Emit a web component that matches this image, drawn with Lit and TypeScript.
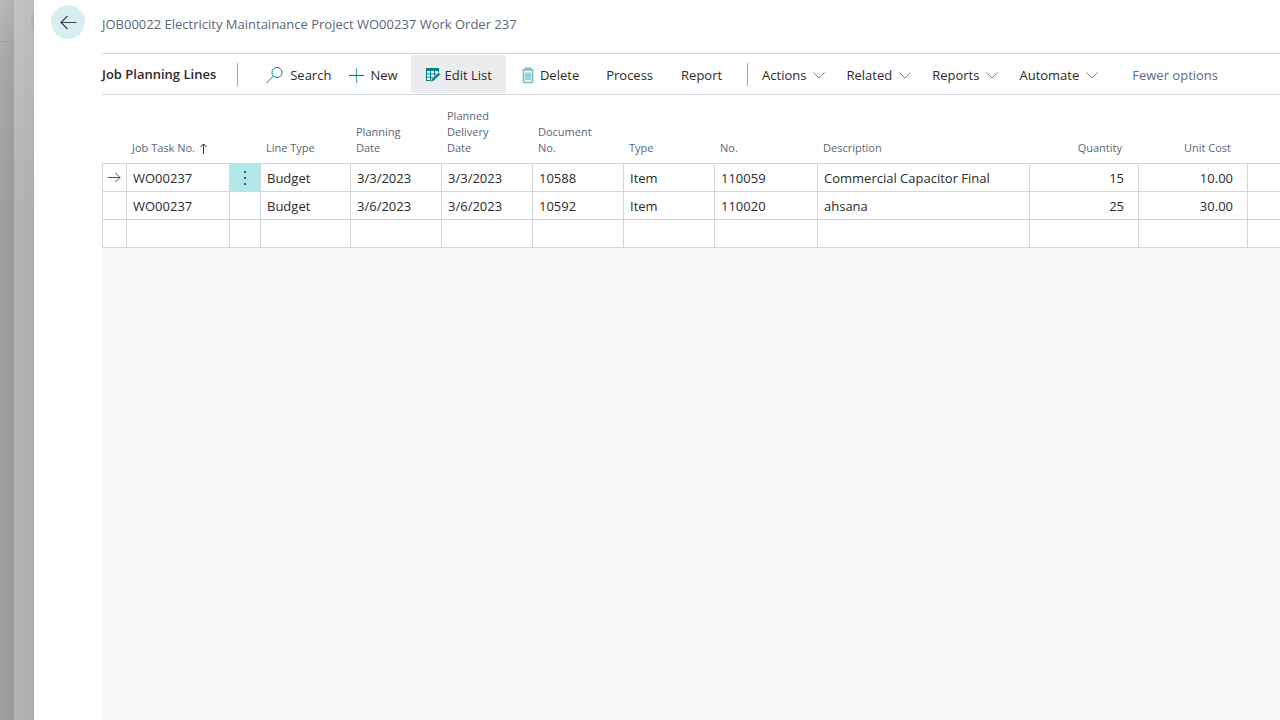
import { LitElement, html, css, svg } from "lit";
import { customElement, property } from "lit/decorators.js";

const icons: Record<string, { width: number; art: unknown }> = {
  search: { width: 19, art: svg`<circle cx="11" cy="5.500" r="5"/><path d="M7.400 9.100.500 16"/>` },
  plus: { width: 16, art: svg`<path d="M0 8.500h15" stroke-width="1.200"/><path d="M7.500 1v15" stroke-width="1.400" opacity=".6"/>` },
  edit: {
    width: 16,
    art: svg`<path d="M1 2h13v11H1z" fill="#fff" stroke="none"/><path d="M1 1h13v3H1z" fill="currentColor" stroke="none"/><path d="M1.500 2v11.500H6M13.500 2v4M1 7h11M1 10.200h8M5.500 4v9.500M9.500 4v6" stroke-width="1.100"/><path d="m13.600 5.500 1.900 1.900-7 6.600-3 .9.900-2.900z" fill="currentColor" stroke="#ebecee" stroke-width=".6"/>`,
  },
  trash: {
    width: 14,
    art: svg`<path d="M1 3h12M4.500 3V1.200h5V3M2.500 4v10.500q0 1 1 1h7q1 0 1-1V4" opacity=".55" stroke-width="1.600"/><path d="M5 5.500V13M7 5.500V13M9 5.500V13" opacity=".75"/>`,
  },
};

@customElement("command-button")
export class CommandButton extends LitElement {
  @property() label = "";
  @property() icon = "";
  @property({ type: Boolean }) menu = false;
  @property({ type: Boolean, reflect: true }) active = false;
  @property({ type: Boolean, reflect: true }) muted = false;

  static styles = css`
    :host { display: flex; flex: none; }
    button {
      display: flex; align-items: center; gap: 7px;
      height: 38px; padding: 2px 14px 0; border: 0; border-radius: 2px;
      background: transparent; color: #2b2b2b;
      font: 13px/20px "Open Sans", "Noto Sans", sans-serif; white-space: nowrap;
    }
    .menu { padding: 2px 10px 0 11px; }
    .tool { padding: 2px 13px 0 5px; gap: 5px; }
    :host([active]) button { background: #ebecee; padding: 2px 14px 0; gap: 4px; }
    :host([muted]) button { color: #5f6b7e; }
    .icon { height: 17px; fill: none; stroke: currentColor; color: #00838a; }
    .chevron { width: 12px; height: 7px; fill: none; stroke: #7c8188; }
  `;

  renderIcon() {
    const icon = icons[this.icon];
    return icon
      ? html`<svg class="icon" width=${icon.width} viewBox="0 0 ${icon.width} 17" aria-hidden="true">${icon.art}</svg>`
      : "";
  }

  render() {
    return html`<button type="button" class=${this.menu ? "menu" : this.icon ? "tool" : ""}>
      ${this.renderIcon()}
      <span>${this.label}</span>
      ${this.menu ? html`<svg class="chevron" viewBox="0 0 12 7" aria-hidden="true"><path d="M.5.500 6 6 11.500.500"/></svg>` : ""}
    </button>`;
  }
}

const columns = [
  { label: "Line Type", width: 90 },
  { label: "Planning Date", width: 91 },
  { label: "Planned Delivery Date", width: 91 },
  { label: "Document No.", width: 91 },
  { label: "Type", width: 91 },
  { label: "No.", width: 103 },
  { label: "Description", width: 212 },
  { label: "Quantity", width: 109, numeric: true },
  { label: "Unit Cost", width: 109, numeric: true },
];

const rows = [
  ["WO00237", "Budget", "3/3/2023", "3/3/2023", "10588", "Item", "110059", "Commercial Capacitor Final", "15", "10.00"],
  ["WO00237", "Budget", "3/6/2023", "3/6/2023", "10592", "Item", "110020", "ahsana", "25", "30.00"],
  ["", "", "", "", "", "", "", "", "", ""],
];

@customElement("planning-lines")
export class PlanningLines extends LitElement {
  static styles = css`
    :host { display: block; background: #f5f7f9; flex: 1; }
    table { width: 100%; table-layout: fixed; border-spacing: 0; background: #fff; }
    .selector { width: 24px; }
    .task { width: 103px; }
    .more { width: 31px; }
    th {
      height: 61px; padding: 0 20px 7px 6px; vertical-align: bottom; text-align: left;
      font-size: 11px; line-height: 16px; font-weight: 400; color: #5b677a;
      border-bottom: 1px solid #d3d6da;
    }
    td {
      height: 27px; padding: 0 6px; line-height: 20px; white-space: nowrap;
      border-left: 1px solid #d3d6da; border-bottom: 1px solid #d3d6da;
    }
    th.numeric { text-align: right; padding-right: 16px; }
    td.numeric { text-align: right; padding-right: 14px; }
    .sort { display: flex; align-items: center; gap: 5px; padding: 0; border: 0; background: none; font: inherit; color: inherit; white-space: nowrap; }
    .up { width: 7px; height: 11px; fill: none; stroke: #333; }
    td.icon-cell { padding: 0; }
    .arrow { display: block; margin: auto; width: 13px; height: 11px; fill: none; stroke: #505050; }
    .selected { background: #b2e8ea; border-left-color: #b2e8ea; }
    .dots { display: flex; align-items: center; justify-content: center; width: 100%; height: 27px; padding: 0; border: 0; background: none; }
    .dots svg { width: 2px; height: 14px; fill: #3c5d60; }
  `;

  render() {
    return html`<table>
      <colgroup>
        <col class="selector" /><col class="task" /><col class="more" />
        ${columns.map((c) => html`<col style="width:${c.width}px" />`)}
        <col />
      </colgroup>
      <thead><tr>
        <th></th>
        <th colspan="2" scope="col" aria-sort="ascending"><button type="button" class="sort">Job Task No.<svg class="up" viewBox="0 0 7 11" aria-hidden="true"><path d="M3.500 11V1M.5 4l3-3 3 3"/></svg></button></th>
        ${columns.map((c) => html`<th scope="col" class=${c.numeric ? "numeric" : ""}>${c.label}</th>`)}
        <th></th>
      </tr></thead>
      <tbody>
        ${rows.map((r, i) => html`<tr>
          <td class="icon-cell">${i === 0 ? html`<svg class="arrow" viewBox="0 0 13 11" aria-hidden="true"><path d="M0 5.500h12M7.500 1 12 5.500 7.500 10"/></svg>` : ""}</td>
          <td>${r[0]}</td>
          <td class=${i === 0 ? "icon-cell selected" : "icon-cell"}>${i === 0 ? html`<button type="button" class="dots" aria-label="Show more options"><svg viewBox="0 0 2 14" aria-hidden="true"><path d="M0 0h2v2H0zM0 6h2v2H0zM0 12h2v2H0z"/></svg></button>` : ""}</td>
          ${r.slice(1).map((v, c) => html`<td class=${columns[c].numeric ? "numeric" : ""}>${v}</td>`)}
          <td></td>
        </tr>`)}
      </tbody>
    </table>`;
  }
}

@customElement("app-root")
export class AppRoot extends LitElement {
  static styles = css`
    :host {
      display: flex; min-height: 100vh; overflow: hidden; background: #fff; color: #2b2b2b;
      font: 13px/20px "Open Sans", "Noto Sans", sans-serif;
    }
    .under { flex: none; width: 14px; background: linear-gradient(90deg, #0000, #0000000c), linear-gradient(#bababa, #a9abab 60px, #a1a1a1 200px, #a1a1a1); }
    .under hr { margin: 41px 0 0; border: 0; height: 1px; background: #a0a0a0; }
    .middle { flex: none; width: 20px; overflow: hidden; background: linear-gradient(90deg, #0000, #0000000a), linear-gradient(#c4c4c4, #b5b5b5 200px, #b3b3b3); }
    .ghost { width: 34px; height: 34px; margin: 5px 0 0 17px; border-radius: 50%; background: #a5b4b4; }
    .rail { flex: none; width: 68px; padding: 5px 0 0 17px; box-sizing: border-box; }
    .back { display: flex; align-items: center; justify-content: center; width: 34px; height: 34px; padding: 0; border: 0; border-radius: 50%; background: #d8eff1; }
    .back svg { width: 17px; height: 15px; fill: none; stroke: #404548; stroke-width: 1.200; }
    main { flex: 1; min-width: 0; display: flex; flex-direction: column; }
    .caption { margin: 0; padding: 14px 0 19px; font-size: 13px; line-height: 20px; font-weight: 400; color: #5b677a; }
    .bar { display: flex; align-items: center; height: 40px; border-top: 1px solid #d3d4da; border-bottom: 1px solid #d3d4da; }
    h2 { margin: 0; font-size: 13px; line-height: 20px; font-weight: 600; white-space: nowrap; }
    .rule { flex: none; width: 1px; height: 23px; background: #a5a8b0; }
    .title-rule { margin: 0 23px 0 21px; }
    .menu-rule { margin: 0 3px 0 11px; }
    .spaced { margin-left: 10px; }
  `;

  render() {
    return html`
      <div class="under"><hr /></div>
      <div class="middle"><div class="ghost"></div></div>
      <div class="rail"><button type="button" class="back" aria-label="Back"><svg viewBox="0 0 17 15" aria-hidden="true"><path d="M16.500 7.500H1M7.500 1 1 7.500 7.500 14"/></svg></button></div>
      <main>
        <h1 class="caption">JOB00022 Electricity Maintainance Project WO00237 Work Order 237</h1>
        <div class="bar">
          <h2>Job Planning Lines</h2>
          <span class="rule title-rule"></span>
          <command-button icon="search" label="Search"></command-button>
          <command-button icon="plus" label="New"></command-button>
          <command-button icon="edit" label="Edit List" active></command-button>
          <command-button class="spaced" icon="trash" label="Delete"></command-button>
          <command-button label="Process"></command-button>
          <command-button label="Report"></command-button>
          <span class="rule menu-rule"></span>
          <command-button menu label="Actions"></command-button>
          <command-button menu label="Related"></command-button>
          <command-button menu label="Reports"></command-button>
          <command-button menu label="Automate"></command-button>
          <command-button class="spaced" muted label="Fewer options"></command-button>
        </div>
        <planning-lines></planning-lines>
      </main>`;
  }
}
